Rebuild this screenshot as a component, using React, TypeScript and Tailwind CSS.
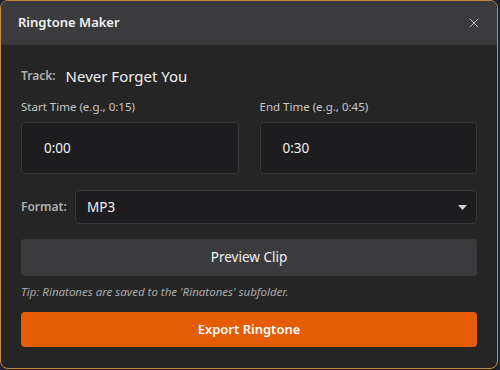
import { X } from "lucide-react";

export default function App() {
  return (
    <div
      className="w-[500px] h-[370px] bg-[#1b2430] overflow-hidden"
      style={{ fontFamily: '"Noto Sans", "Open Sans", sans-serif' }}
    >
      <div className="w-[498px] h-[369px] flex flex-col rounded-[8px] border border-[#c98a3e] bg-[#252525] overflow-hidden">
        {/* header */}
        <div className="h-[44px] shrink-0 bg-[#3b3b3d] flex items-center justify-between pl-[17px] pr-[15px]">
          <span className="text-[13px] font-semibold text-[#f0f0f0]">Ringtone Maker</span>
          <X className="w-[16px] h-[16px] text-[#bdbdbd]" strokeWidth={1.5} />
        </div>

        <div className="flex flex-col px-[20px]">
          {/* track */}
          <div className="flex items-center h-[20px] mt-[21px] gap-[10px]">
            <span className="text-[12px] font-semibold text-[#b0b0b0]">Track:</span>
            <span className="text-[15px] text-[#f2f2f2]">Never Forget You</span>
          </div>

          {/* times */}
          <div className="grid grid-cols-2 gap-[21px] mt-[13px]">
            <div className="flex flex-col">
              <span className="text-[11.5px] text-[#c8c8c8] leading-[16px]">Start Time (e.g., 0:15)</span>
              <div className="mt-[7px] h-[52px] rounded-[4px] bg-[#1d1d1f] border border-[#383838] flex items-center pl-[22px] text-[13.5px] text-[#f2f2f2]">
                0:00
              </div>
            </div>
            <div className="flex flex-col">
              <span className="text-[11.5px] text-[#c8c8c8] leading-[16px]">End Time (e.g., 0:45)</span>
              <div className="mt-[7px] h-[52px] rounded-[4px] bg-[#1d1d1f] border border-[#383838] flex items-center pl-[22px] text-[13.5px] text-[#f2f2f2]">
                0:30
              </div>
            </div>
          </div>

          {/* format */}
          <div className="flex items-center mt-[16px] gap-[10px]">
            <span className="text-[12px] font-semibold text-[#b0b0b0] w-[44px]">Format:</span>
            <div className="flex-1 h-[34px] rounded-[4px] bg-[#1d1d1f] border border-[#383838] flex items-center justify-between pl-[11px] pr-[9px]">
              <span className="text-[13.5px] text-[#f2f2f2]">MP3</span>
              <svg width="9" height="5" viewBox="0 0 9 5">
                <path d="M0 0 H9 L4.5 5 Z" fill="#d0d0d0" />
              </svg>
            </div>
          </div>

          {/* preview */}
          <div className="mt-[15px] h-[37px] rounded-[4px] bg-[#3b3b3d] flex items-center justify-center text-[13.5px] text-[#f2f2f2]">
            Preview Clip
          </div>

          <p className="mt-[8px] text-[11.5px] italic text-[#a8a8a8] leading-[16px]">
            Tip: Rinatones are saved to the 'Rinatones' subfolder.
          </p>

          {/* export */}
          <div className="mt-[12px] h-[35px] rounded-[4px] bg-[#e65c02] flex items-center justify-center text-[13px] font-semibold text-white">
            Export Ringtone
          </div>
        </div>
      </div>
    </div>
  );
}
